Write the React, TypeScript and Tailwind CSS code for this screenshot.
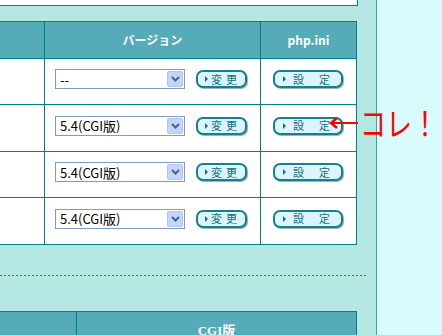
import React from 'react';

const jp = 'font-["Noto_Sans_CJK_JP","Liberation_Sans",sans-serif]';

const Tri = () => (
  <svg width="3" height="6" viewBox="0 0 3 6" className="shrink-0">
    <path d="M0 0 L3 3 L0 6 Z" fill="#13707e" />
  </svg>
);

const PillButton: React.FC<{ width: string; children: React.ReactNode }> = ({ width, children }) => (
  <div
    className={`${width} h-[18px] flex items-center rounded-[7px] border-2 border-[#17808c] bg-[#dcf5fd] shadow-[1px_1px_0_#9fb4b8] text-[11px] leading-none text-[#13707e] ${jp}`}
  >
    {children}
  </div>
);

const FakeSelect: React.FC<{ value: string }> = ({ value }) => (
  <div className={`w-[130px] h-[20px] flex items-center justify-between border border-[#7f9db9] bg-white ${jp}`}>
    <span className="pl-[4px] text-[13px] leading-none text-black">{value}</span>
    <div className="w-[16px] h-[16px] mr-[1px] flex items-center justify-center rounded-[2px] border border-[#b1c4f3] bg-[#c3d5fd]">
      <svg width="9" height="6" viewBox="0 0 9 6">
        <path d="M1 1 L4.5 4.5 L8 1" stroke="#4d6185" strokeWidth="2" fill="none" />
      </svg>
    </div>
  </div>
);

const rows = [
  { value: '--', h: 'h-[46px]' },
  { value: '5.4(CGI版)', h: 'h-[47px]' },
  { value: '5.4(CGI版)', h: 'h-[46px]' },
  { value: '5.4(CGI版)', h: 'h-[47px]' },
];

export default function App() {
  return (
    <div className="relative flex w-[442px] h-[335px] overflow-hidden bg-[#d9fbfb]">
      <div className="w-[377px] shrink-0 bg-[#b4e6e2] border-r border-[#3fa5a8]">
        <div className="h-[6px] w-[358px] bg-white border-b border-r border-[#00808a]" />

        <div className="mt-[15px] w-[357px] border-t border-r border-[#00808a]">
          <div className="flex h-[37px] bg-[#55abb8] border-b border-[#00808a] text-white font-bold text-[12px]">
            <div className="w-[45px] border-r border-[#00808a]" />
            <div className={`w-[216px] flex items-center justify-center border-r border-[#00808a] ${jp}`}>バージョン</div>
            <div className={`w-[95px] flex items-center justify-center ${jp}`}>php.ini</div>
          </div>
          {rows.map((r, i) => (
            <div key={i} className={`flex ${r.h} bg-white border-b border-[#00808a]`}>
              <div className="w-[45px] border-r border-[#00808a]" />
              <div className="w-[216px] flex items-center pl-[10px] pb-[5px] gap-[11px] border-r border-[#00808a]">
                <FakeSelect value={r.value} />
                <PillButton width="w-[51px]">
                  <span className="ml-[7px]"><Tri /></span>
                  <span className="ml-[3px]">変</span>
                  <span className="ml-[4px]">更</span>
                </PillButton>
              </div>
              <div className="w-[95px] flex items-center pl-[12px] pb-[5px]">
                <PillButton width="w-[70px]">
                  <span className="ml-[8px]"><Tri /></span>
                  <span className="ml-[7px]">設</span>
                  <span className="ml-[15px]">定</span>
                </PillButton>
              </div>
            </div>
          ))}
        </div>

        <div className="mt-[30px] w-[366px] h-[1px] bg-[repeating-linear-gradient(to_right,#1d8a90_0_2px,transparent_2px_4px)]" />

        <div className="mt-[35px] w-[357px] border-t border-r border-[#00808a]">
          <div className="flex h-[37px] bg-[#55abb8] text-white font-bold text-[12px]">
            <div className="w-[77px] border-r border-[#00808a]" />
            <div className={`flex-1 flex items-center justify-center font-["Liberation_Serif","Noto_Sans_CJK_JP",serif] text-[13px]`}>CGI版</div>
          </div>
        </div>
      </div>

      <svg className="absolute left-[328px] top-[117px]" width="32" height="12" viewBox="0 0 32 12">
        <path d="M5 6 L30 6" stroke="#ff0000" strokeWidth="2" />
        <path d="M9 1 L3 6 L9 11" stroke="#ff0000" strokeWidth="2.5" fill="none" />
      </svg>
      <div className={`absolute left-[360px] top-[106px] whitespace-nowrap text-[26px] leading-none text-[#ff0000] scale-y-125 origin-top ${jp}`}>
        コレ！
      </div>
    </div>
  );
}
